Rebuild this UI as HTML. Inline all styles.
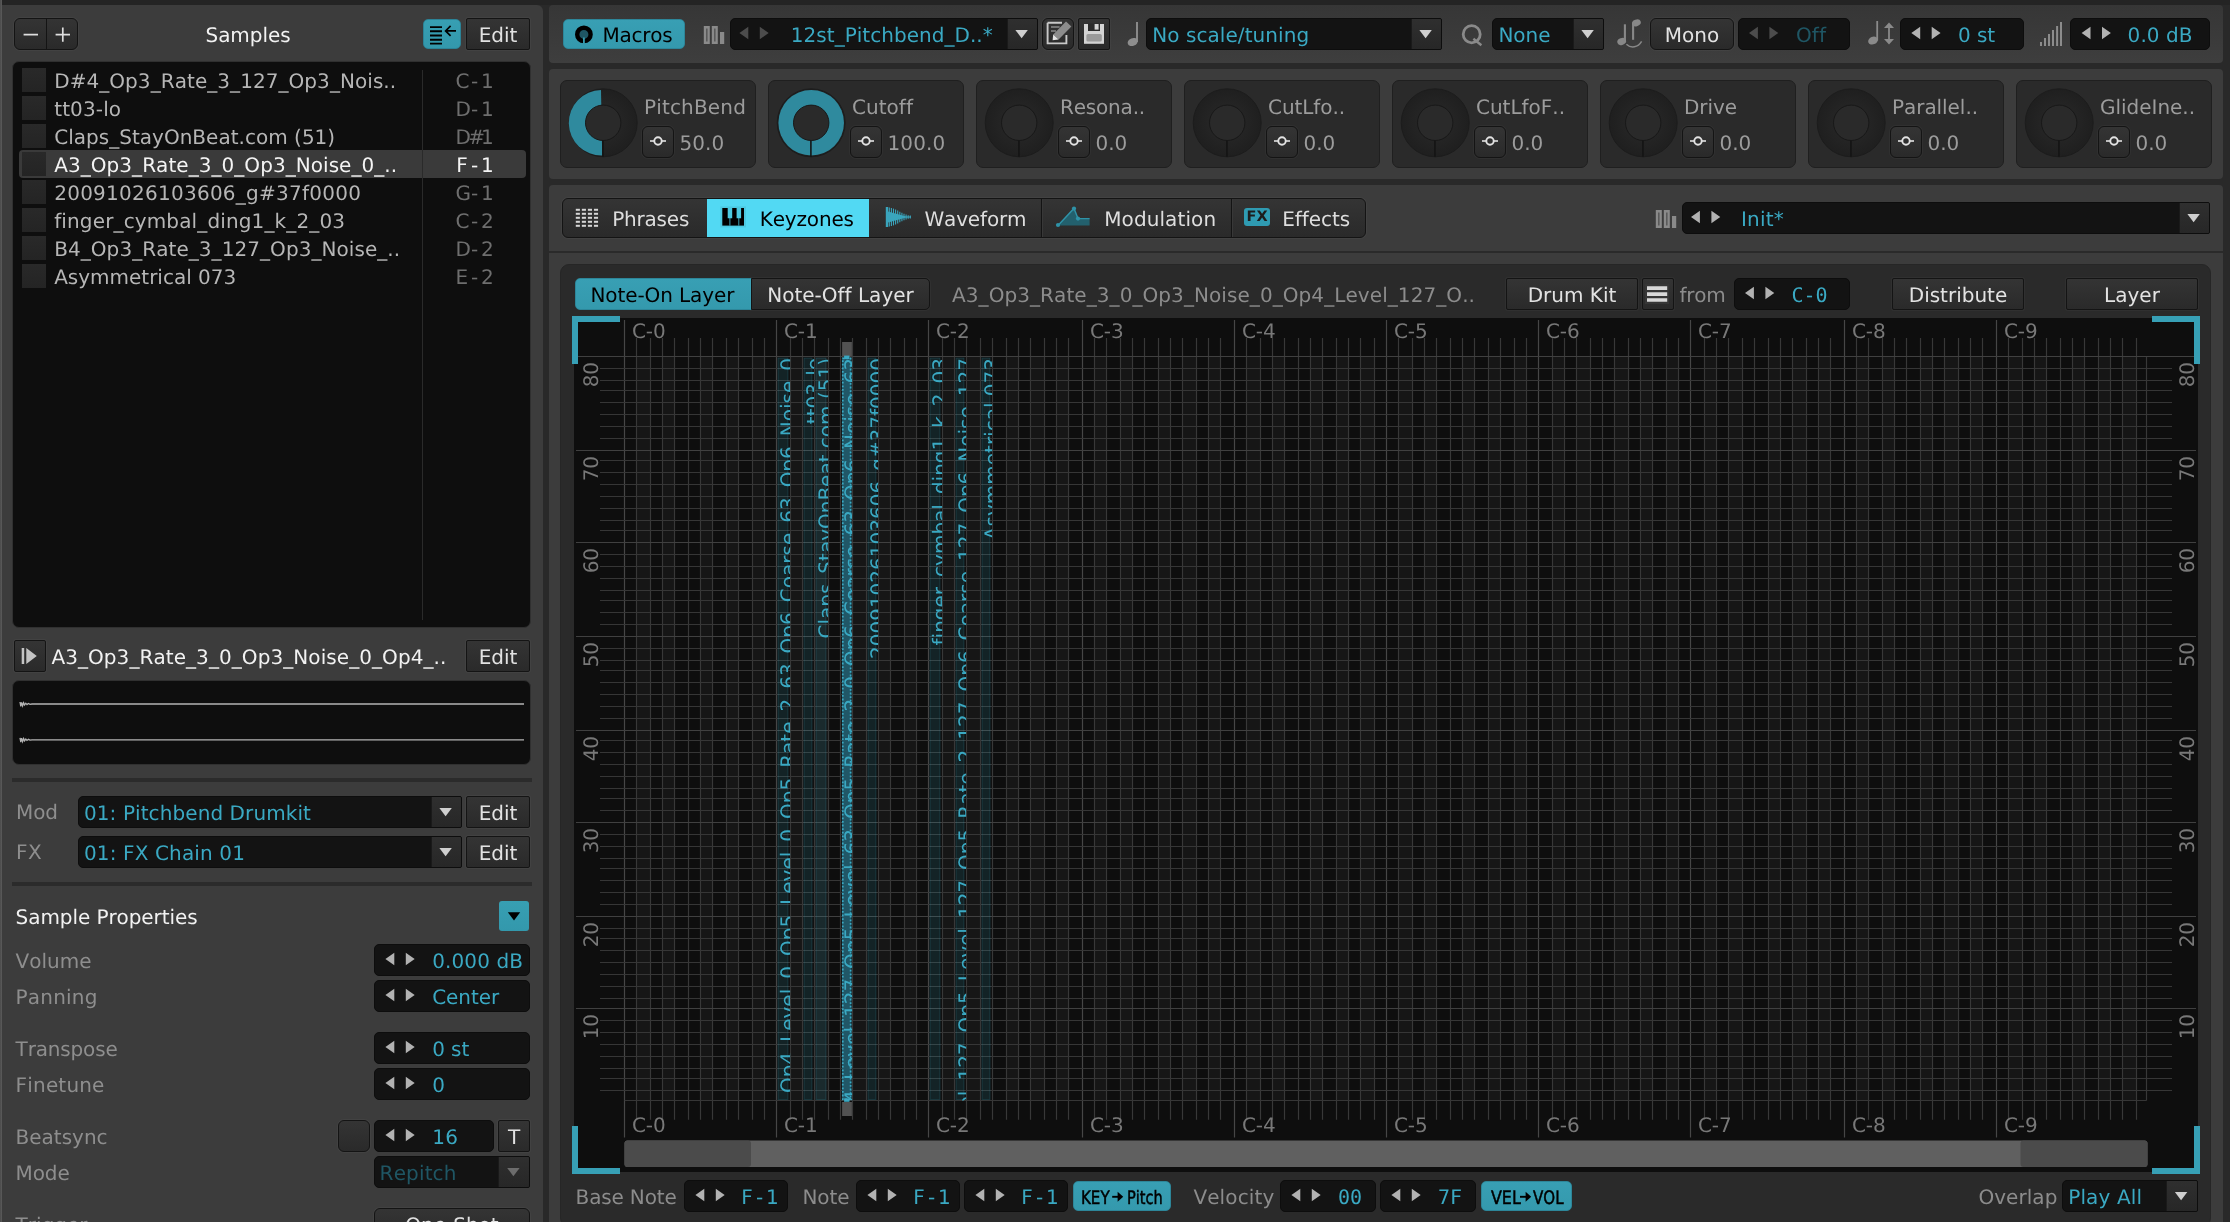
<!DOCTYPE html><html><head><meta charset="utf-8"><title>Sampler Keyzones</title><style>
*{box-sizing:border-box;margin:0;padding:0}
html,body{width:2230px;height:1222px;overflow:hidden;background:#292929}
body{position:relative;font-family:"DejaVu Sans","Liberation Sans",sans-serif;font-size:20px;color:#e4e4e4;line-height:24px;-webkit-font-smoothing:antialiased;font-kerning:none;font-variant-ligatures:none;text-rendering:geometricPrecision}
.a{position:absolute}
.pn{position:absolute;background:#3c3c3c}
.btn{position:absolute;border:1px solid #141414;background:linear-gradient(#343434,#2a2a2a);color:#e2e2e2;text-align:center;white-space:nowrap;box-shadow:0 0 0 1px rgba(255,255,255,0.03)}
.vb{position:absolute;background:#131313;border-radius:5px;border:1px solid #0d0d0d;white-space:nowrap;overflow:hidden}
.dd{position:absolute;top:0;bottom:0;right:0;background:linear-gradient(#2f2f2f,#272727);border-left:1px solid #1a1a1a}
.t{position:absolute;white-space:nowrap}
.teal{color:#3aa9c3}
.dim{color:#1f5664}
.lab{color:#8e8e8e}
.mono{font-family:"DejaVu Sans Mono","Liberation Mono",monospace}
svg{position:absolute;overflow:visible}
</style></head><body><div id="root" style="position:absolute;left:0;top:0;width:2230px;height:1222px;overflow:hidden;will-change:transform">
<div class="a" style="left:0px;top:0px;width:2230px;height:5px;background:#242424"></div>
<div class="a" style="left:0px;top:0px;width:2px;height:1222px;background:linear-gradient(90deg,#4a4a4a,#5c5c5c)"></div>
<div class="pn" style="left:2px;top:5px;width:541px;height:1217px;border-radius:0 6px 0 0"></div>
<div class="pn" style="left:549px;top:5px;width:1674px;height:58px;border-radius:4px;background:linear-gradient(#363636,#3e3e3e)"></div>
<div class="pn" style="left:549px;top:69px;width:1674px;height:110px;border-radius:4px"></div>
<div class="pn" style="left:549px;top:185px;width:1674px;height:1045px;border-radius:4px"></div>
<div class="a" style="left:549px;top:250.8px;width:1674px;height:2.3999999999999773px;background:#2a2a2a"></div>
<div class="btn" style="left:14px;top:18px;width:64px;height:32px;border-radius:6px"><div class="a" style="left:30.5px;top:0;bottom:0;width:1px;background:#141414"></div></div>
<svg class="a" style="left:0;top:0" width="1" height="1"><path d="M23.6,34.6H38 M55.6,34.6H70 M62.8,27.4V41.8" stroke="#dedede" stroke-width="1.7" fill="none"/></svg>
<div class="t " style="left:205.5px;top:22.98px;font-size:20px;line-height:24.0px;letter-spacing:-0.059px;color:#f2f2f2">Samples</div>
<div class="a" style="left:423px;top:19px;width:38px;height:30px;background:linear-gradient(#379fb3,#3398ac);border-radius:5px;border:1px solid #2b8397"></div>
<svg class="a" style="left:0;top:0" width="1" height="1"><path d="M430,27.1H442 M430,31.3H442 M430,35.5H442 M430,39.7H442 M430,43.6H442" stroke="#000" stroke-width="1.9" fill="none"/><path d="M445.4,30.9H456 M450.6,25.9L445.6,30.9L450.6,35.9" stroke="#000" stroke-width="1.7" fill="none"/></svg>
<div class="btn" style="left:466px;top:18px;width:64px;height:32px;border-radius:2px;">
<div style="position:absolute;left:0;right:0;top:3.90px;line-height:24px;">Edit</div>
</div>
<div class="a" style="left:12px;top:61px;width:519px;height:567px;background:#0e0e0e;border-radius:7px;border:1px solid #303030"></div>
<div class="a" style="left:19px;top:150px;width:507px;height:28px;background:#3a3a3a;border-radius:4px"></div>
<div class="a" style="left:422px;top:70px;width:1px;height:550px;background:#2a2a2a"></div>
<div class="a" style="left:22px;top:68px;width:24px;height:24px;background:linear-gradient(#292929,#242424)"></div>
<div class="t " style="left:54.2px;top:69.08px;font-size:20px;line-height:24.0px;letter-spacing:0.059px;color:#b6b6b6">D#4_Op3_Rate_3_127_Op3_Nois..</div>
<div class="t " style="left:455.6px;top:69.08px;font-size:20px;line-height:24.0px;letter-spacing:0.000px;color:#6e6e6e"><span style="display:inline-block;width:12.7px;text-align:center">C</span><span style="display:inline-block;width:12.7px;text-align:center">-</span><span style="display:inline-block;width:12.7px;text-align:center">1</span></div>
<div class="a" style="left:22px;top:96px;width:24px;height:24px;background:linear-gradient(#292929,#242424)"></div>
<div class="t " style="left:54.2px;top:97.08px;font-size:20px;line-height:24.0px;letter-spacing:0.122px;color:#b6b6b6">tt03-lo</div>
<div class="t " style="left:455.6px;top:97.08px;font-size:20px;line-height:24.0px;letter-spacing:0.000px;color:#6e6e6e"><span style="display:inline-block;width:12.7px;text-align:center">D</span><span style="display:inline-block;width:12.7px;text-align:center">-</span><span style="display:inline-block;width:12.7px;text-align:center">1</span></div>
<div class="a" style="left:22px;top:124px;width:24px;height:24px;background:linear-gradient(#292929,#242424)"></div>
<div class="t " style="left:54.2px;top:125.08px;font-size:20px;line-height:24.0px;letter-spacing:0.018px;color:#b6b6b6">Claps_StayOnBeat.com (51)</div>
<div class="t " style="left:455.6px;top:125.08px;font-size:20px;line-height:24.0px;letter-spacing:0.000px;color:#6e6e6e"><span style="display:inline-block;width:12.7px;text-align:center">D</span><span style="display:inline-block;width:12.7px;text-align:center">#</span><span style="display:inline-block;width:12.7px;text-align:center">1</span></div>
<div class="a" style="left:22px;top:152px;width:24px;height:24px;background:linear-gradient(#292929,#242424)"></div>
<div class="t " style="left:54.2px;top:153.08px;font-size:20px;line-height:24.0px;letter-spacing:0.053px;color:#f4f4f4">A3_Op3_Rate_3_0_Op3_Noise_0_..</div>
<div class="t " style="left:455.6px;top:153.08px;font-size:20px;line-height:24.0px;letter-spacing:0.000px;color:#f4f4f4"><span style="display:inline-block;width:12.7px;text-align:center">F</span><span style="display:inline-block;width:12.7px;text-align:center">-</span><span style="display:inline-block;width:12.7px;text-align:center">1</span></div>
<div class="a" style="left:22px;top:180px;width:24px;height:24px;background:linear-gradient(#292929,#242424)"></div>
<div class="t " style="left:54.2px;top:181.08px;font-size:20px;line-height:24.0px;letter-spacing:0.250px;color:#b6b6b6">20091026103606_g#37f0000</div>
<div class="t " style="left:455.6px;top:181.08px;font-size:20px;line-height:24.0px;letter-spacing:0.000px;color:#6e6e6e"><span style="display:inline-block;width:12.7px;text-align:center">G</span><span style="display:inline-block;width:12.7px;text-align:center">-</span><span style="display:inline-block;width:12.7px;text-align:center">1</span></div>
<div class="a" style="left:22px;top:208px;width:24px;height:24px;background:linear-gradient(#292929,#242424)"></div>
<div class="t " style="left:54.2px;top:209.08px;font-size:20px;line-height:24.0px;letter-spacing:0.137px;color:#b6b6b6">finger_cymbal_ding1_k_2_03</div>
<div class="t " style="left:455.6px;top:209.08px;font-size:20px;line-height:24.0px;letter-spacing:0.000px;color:#6e6e6e"><span style="display:inline-block;width:12.7px;text-align:center">C</span><span style="display:inline-block;width:12.7px;text-align:center">-</span><span style="display:inline-block;width:12.7px;text-align:center">2</span></div>
<div class="a" style="left:22px;top:236px;width:24px;height:24px;background:linear-gradient(#292929,#242424)"></div>
<div class="t " style="left:54.2px;top:237.08px;font-size:20px;line-height:24.0px;letter-spacing:0.061px;color:#b6b6b6">B4_Op3_Rate_3_127_Op3_Noise_..</div>
<div class="t " style="left:455.6px;top:237.08px;font-size:20px;line-height:24.0px;letter-spacing:0.000px;color:#6e6e6e"><span style="display:inline-block;width:12.7px;text-align:center">D</span><span style="display:inline-block;width:12.7px;text-align:center">-</span><span style="display:inline-block;width:12.7px;text-align:center">2</span></div>
<div class="a" style="left:22px;top:264px;width:24px;height:24px;background:linear-gradient(#292929,#242424)"></div>
<div class="t " style="left:54.2px;top:265.08px;font-size:20px;line-height:24.0px;letter-spacing:-0.011px;color:#b6b6b6">Asymmetrical 073</div>
<div class="t " style="left:455.6px;top:265.08px;font-size:20px;line-height:24.0px;letter-spacing:0.000px;color:#6e6e6e"><span style="display:inline-block;width:12.7px;text-align:center">E</span><span style="display:inline-block;width:12.7px;text-align:center">-</span><span style="display:inline-block;width:12.7px;text-align:center">2</span></div>
<div class="btn" style="left:14px;top:640px;width:32px;height:32px;border-radius:2px;">
</div>
<svg class="a" style="left:0;top:0" width="1" height="1"><path d="M21.7,648h2.5v16h-2.5z M26.3,648L36.8,656L26.3,664z" fill="#c4c4c4"/></svg>
<div class="t " style="left:51.4px;top:644.88px;font-size:20px;line-height:24.0px;letter-spacing:0.072px;color:#f2f2f2">A3_Op3_Rate_3_0_Op3_Noise_0_Op4_..</div>
<div class="btn" style="left:466px;top:640px;width:64px;height:32px;border-radius:2px;">
<div style="position:absolute;left:0;right:0;top:3.90px;line-height:24px;">Edit</div>
</div>
<div class="a" style="left:12px;top:680px;width:519px;height:85px;background:#0e0e0e;border-radius:7px;border:1px solid #303030"></div>
<svg class="a" style="left:0;top:0" width="1" height="1"><path d="M20,702L20.8,706.4L21.6,702.4L22.6,705.8L23.6,702.8L24.6,705L25.8,703.2L27,704.6L28.4,703.5L30,704.3L32,704L524,704" stroke="#b4b4b4" stroke-width="1.3" fill="none"/></svg>
<svg class="a" style="left:0;top:0" width="1" height="1"><path d="M20,737.8L20.8,742.1999999999999L21.6,738.1999999999999L22.6,741.5999999999999L23.6,738.5999999999999L24.6,740.8L25.8,739.0L27,740.4L28.4,739.3L30,740.0999999999999L32,739.8L524,739.8" stroke="#b4b4b4" stroke-width="1.3" fill="none"/></svg>
<div class="a" style="left:12px;top:778px;width:520px;height:4px;background:#2b2b2b"></div>
<div class="t lab" style="left:16px;top:800.08px;font-size:20px;line-height:24.0px;letter-spacing:-0.062px;">Mod</div>
<div class="vb" style="left:78px;top:796px;width:384px;height:32px;border-radius:5px 2px 2px 5px;">
<div class="dd" style="width:30px"></div>
</div>
<svg class="a" style="left:0;top:0" width="1" height="1"><path d="M439.40000000000003,808.0500000000001 L451.8,808.0500000000001 L445.6,816.35Z" fill="#cfcfcf"/></svg>
<div class="t teal" style="left:84px;top:800.98px;font-size:20px;line-height:24.0px;letter-spacing:0.087px;">01: Pitchbend Drumkit</div>
<div class="btn" style="left:466px;top:796px;width:64px;height:32px;border-radius:2px;">
<div style="position:absolute;left:0;right:0;top:3.90px;line-height:24px;">Edit</div>
</div>
<div class="t lab" style="left:16px;top:840.08px;font-size:20px;line-height:24.0px;letter-spacing:0.397px;">FX</div>
<div class="vb" style="left:78px;top:836px;width:384px;height:32px;border-radius:5px 2px 2px 5px;">
<div class="dd" style="width:30px"></div>
</div>
<svg class="a" style="left:0;top:0" width="1" height="1"><path d="M439.40000000000003,848.0500000000001 L451.8,848.0500000000001 L445.6,856.35Z" fill="#cfcfcf"/></svg>
<div class="t teal" style="left:84px;top:840.98px;font-size:20px;line-height:24.0px;letter-spacing:0.130px;">01: FX Chain 01</div>
<div class="btn" style="left:466px;top:836px;width:64px;height:32px;border-radius:2px;">
<div style="position:absolute;left:0;right:0;top:3.90px;line-height:24px;">Edit</div>
</div>
<div class="a" style="left:12px;top:882px;width:520px;height:4px;background:#2b2b2b"></div>
<div class="t " style="left:15.6px;top:905.08px;font-size:20px;line-height:24.0px;letter-spacing:-0.072px;color:#f2f2f2">Sample Properties</div>
<div class="a" style="left:499px;top:901px;width:30px;height:30px;background:linear-gradient(#379fb3,#3398ac);border-radius:3px"></div>
<svg class="a" style="left:0;top:0" width="1" height="1"><path d="M507.8,912.1999999999999 L520.2,912.1999999999999 L514,920.6Z" fill="#000"/></svg>
<div class="t lab" style="left:15.6px;top:949.38px;font-size:20px;line-height:24.0px;letter-spacing:0.010px;">Volume</div>
<div class="vb" style="left:374px;top:944px;width:156px;height:32px;">
</div>
<svg class="a" style="left:0;top:0" width="1" height="1"><path d="M385.4,959.0 L394.29999999999995,952.8 L394.29999999999995,965.2Z M414.69999999999993,959.0 L405.79999999999995,952.8 L405.79999999999995,965.2Z" fill="#b2b2b2"/></svg>
<div class="t teal" style="left:432.2px;top:948.98px;font-size:20px;line-height:24.0px;letter-spacing:0.121px;">0.000 dB</div>
<div class="t lab" style="left:15.6px;top:985.38px;font-size:20px;line-height:24.0px;letter-spacing:0.200px;">Panning</div>
<div class="vb" style="left:374px;top:980px;width:156px;height:32px;">
</div>
<svg class="a" style="left:0;top:0" width="1" height="1"><path d="M385.4,995.0 L394.29999999999995,988.8 L394.29999999999995,1001.2Z M414.69999999999993,995.0 L405.79999999999995,988.8 L405.79999999999995,1001.2Z" fill="#b2b2b2"/></svg>
<div class="t teal" style="left:432.2px;top:984.98px;font-size:20px;line-height:24.0px;letter-spacing:-0.053px;">Center</div>
<div class="t lab" style="left:15.6px;top:1037.38px;font-size:20px;line-height:24.0px;letter-spacing:-0.161px;">Transpose</div>
<div class="vb" style="left:374px;top:1032px;width:156px;height:32px;">
</div>
<svg class="a" style="left:0;top:0" width="1" height="1"><path d="M385.4,1047.0 L394.29999999999995,1040.8 L394.29999999999995,1053.2Z M414.69999999999993,1047.0 L405.79999999999995,1040.8 L405.79999999999995,1053.2Z" fill="#b2b2b2"/></svg>
<div class="t teal" style="left:432.2px;top:1036.98px;font-size:20px;line-height:24.0px;letter-spacing:-0.086px;">0 st</div>
<div class="t lab" style="left:15.6px;top:1073.38px;font-size:20px;line-height:24.0px;letter-spacing:0.182px;">Finetune</div>
<div class="vb" style="left:374px;top:1068px;width:156px;height:32px;">
</div>
<svg class="a" style="left:0;top:0" width="1" height="1"><path d="M385.4,1083.0 L394.29999999999995,1076.8 L394.29999999999995,1089.2Z M414.69999999999993,1083.0 L405.79999999999995,1076.8 L405.79999999999995,1089.2Z" fill="#b2b2b2"/></svg>
<div class="t teal" style="left:432.2px;top:1072.98px;font-size:20px;line-height:24.0px;letter-spacing:0.275px;">0</div>
<div class="t lab" style="left:15.6px;top:1125.38px;font-size:20px;line-height:24.0px;letter-spacing:-0.007px;">Beatsync</div>
<div class="btn" style="left:338px;top:1120px;width:32px;height:32px;border-radius:6px;">
</div>
<div class="vb" style="left:374px;top:1120px;width:120px;height:32px;">
</div>
<svg class="a" style="left:0;top:0" width="1" height="1"><path d="M385.4,1135.0 L394.29999999999995,1128.8 L394.29999999999995,1141.2Z M414.69999999999993,1135.0 L405.79999999999995,1128.8 L405.79999999999995,1141.2Z" fill="#b2b2b2"/></svg>
<div class="t teal" style="left:432.2px;top:1124.98px;font-size:20px;line-height:24.0px;letter-spacing:0.275px;">16</div>
<div class="btn" style="left:498px;top:1120px;width:32px;height:32px;border-radius:2px;">
<div style="position:absolute;left:0;right:0;top:3.90px;line-height:24px;">T</div>
</div>
<div class="t lab" style="left:15.6px;top:1161.38px;font-size:20px;line-height:24.0px;letter-spacing:-0.123px;">Mode</div>
<div class="vb" style="left:374px;top:1156px;width:156px;height:32px;border-radius:5px 2px 2px 5px"><div class="dd" style="width:31px"></div></div>
<svg class="a" style="left:0;top:0" width="1" height="1"><path d="M507.2,1168.05 L519.6,1168.05 L513.4,1176.3500000000001Z" fill="#6c6c6c"/></svg>
<div class="t dim" style="left:379.6px;top:1160.98px;font-size:20px;line-height:24.0px;letter-spacing:0.147px;">Repitch</div>
<div class="t lab" style="left:15.6px;top:1213.38px;font-size:20px;line-height:24.0px;letter-spacing:0.012px;">Trigger</div>
<div class="btn" style="left:374px;top:1208px;width:156px;height:32px;border-radius:6px;">
<div style="position:absolute;left:0;right:0;top:3.90px;line-height:24px;">One-Shot</div>
</div>
<div class="a" style="left:563px;top:19px;width:122px;height:30px;background:linear-gradient(#389fb4,#3499ad);border-radius:5px;border:1px solid #2d8699"></div>
<svg class="a" style="left:0;top:0" width="1" height="1"><circle cx="583.9" cy="34.4" r="6.7" fill="#1f5664" stroke="#000" stroke-width="4.4"/><path d="M583.9,37.5V44" stroke="#359cb0" stroke-width="1.8"/></svg>
<div class="t " style="left:602.4px;top:22.88px;font-size:20px;line-height:24.0px;letter-spacing:-0.232px;color:#000">Macros</div>
<svg class="a" style="left:0;top:0" width="1" height="1"><path d="M703.8,26h6v18h-6z M711.8,26h6v18h-6z M720.0,32h4.2v12h-4.2z" fill="#8a8a8a"/><path d="M706.8,28.4v13.2 M714.8,28.4v13.2" stroke="#5a5a5a" stroke-width="1.6"/></svg>
<div class="vb" style="left:730px;top:18px;width:308px;height:32px;border-radius:5px 2px 2px 5px;">
<div class="dd" style="width:30px"></div>
</div>
<svg class="a" style="left:0;top:0" width="1" height="1"><path d="M739.4,33.0 L748.3,26.8 L748.3,39.2Z M768.6999999999999,33.0 L759.8,26.8 L759.8,39.2Z" fill="#4c4c4c"/></svg>
<svg class="a" style="left:0;top:0" width="1" height="1"><path d="M1015.4,30.050000000000004 L1027.8,30.050000000000004 L1021.6,38.35Z" fill="#cfcfcf"/></svg>
<div class="t teal" style="left:790.8px;top:22.98px;font-size:20px;line-height:24.0px;letter-spacing:0.035px;">12st_Pitchbend_D..*</div>
<div class="btn" style="left:1042px;top:18px;width:32px;height:32px;border-radius:6px;">
</div>
<svg class="a" style="left:0;top:0" width="1" height="1"><path d="M1047.6,22.8H1062 M1047.6,22.8V43.4H1066.4V35" stroke="#c8c8c8" stroke-width="1.9" fill="none"/><path d="M1051,27H1059.6 M1051,31H1056" stroke="#8a8a8a" stroke-width="1.7"/><path d="M1066,21.4L1071.4,26.6L1058.6,39.6L1053.2,34.4Z" fill="#8c8c8c"/><path d="M1053.2,34.4L1058.6,39.6L1052.6,40.2Z" fill="#e4e4e4"/></svg>
<div class="btn" style="left:1078px;top:18px;width:32px;height:32px;border-radius:2px;">
</div>
<svg class="a" style="left:0;top:0" width="1" height="1"><path d="M1084,24H1104V43.8H1084Z" fill="#d4d4d4"/><path d="M1088,23.5H1100V31H1088Z" fill="#2b2b2b"/><path d="M1094.6,24H1098.6V29.6H1094.6Z" fill="#d4d4d4"/><rect x="1086.4" y="34" width="15.4" height="7.6" rx="1.6" fill="#9a9a9a"/></svg>
<svg class="a" style="left:0;top:0" width="1" height="1"><ellipse cx="1132.7" cy="42" rx="5.2" ry="3.9" transform="rotate(-22 1132.7 42)" fill="#8e8e8e"/><path d="M1137,22V42" stroke="#8e8e8e" stroke-width="1.9"/></svg>
<div class="vb" style="left:1146px;top:18px;width:296px;height:32px;border-radius:5px 2px 2px 5px;">
<div class="dd" style="width:30px"></div>
</div>
<svg class="a" style="left:0;top:0" width="1" height="1"><path d="M1419.3999999999999,30.050000000000004 L1431.8,30.050000000000004 L1425.6,38.35Z" fill="#cfcfcf"/></svg>
<div class="t teal" style="left:1152.2px;top:22.98px;font-size:20px;line-height:24.0px;letter-spacing:0.070px;">No scale/tuning</div>
<svg class="a" style="left:0;top:0" width="1" height="1"><ellipse cx="1471.7" cy="34.2" rx="8.5" ry="8.6" fill="none" stroke="#8a8a8a" stroke-width="2.8"/><path d="M1473.4,38.8L1481.4,45.2" stroke="#8a8a8a" stroke-width="2.4"/></svg>
<div class="vb" style="left:1492px;top:18px;width:112px;height:32px;border-radius:5px 2px 2px 5px;">
<div class="dd" style="width:30px"></div>
</div>
<svg class="a" style="left:0;top:0" width="1" height="1"><path d="M1581.3999999999999,30.050000000000004 L1593.8,30.050000000000004 L1587.6,38.35Z" fill="#cfcfcf"/></svg>
<div class="t teal" style="left:1498.4px;top:22.98px;font-size:20px;line-height:24.0px;letter-spacing:-0.045px;">None</div>
<svg class="a" style="left:0;top:0" width="1" height="1"><ellipse cx="1621.7" cy="41.5" rx="4.5" ry="3.4" transform="rotate(-20 1621.7 41.5)" fill="#888"/><path d="M1624.9,24.3V41.5" stroke="#888" stroke-width="2.1"/><ellipse cx="1636.4" cy="22.9" rx="4.5" ry="3.4" transform="rotate(-20 1636.4 22.9)" fill="#888"/><path d="M1633.1,23V39.8" stroke="#888" stroke-width="2.1"/><path d="M1626.4,44.2C1631,48.6 1638,47.6 1641.6,41.4" stroke="#888" stroke-width="1.5" fill="none"/></svg>
<div class="btn" style="left:1650px;top:18px;width:84px;height:32px;border-radius:6px;">
<div style="position:absolute;left:0;right:0;top:3.90px;line-height:24px;">Mono</div>
</div>
<div class="vb" style="left:1738px;top:18px;width:112px;height:32px;">
</div>
<svg class="a" style="left:0;top:0" width="1" height="1"><path d="M1749,33.0 L1757.9,26.8 L1757.9,39.2Z M1778.3000000000002,33.0 L1769.4,26.8 L1769.4,39.2Z" fill="#4c4c4c"/></svg>
<div class="t dim" style="left:1796px;top:22.98px;font-size:20px;line-height:24.0px;letter-spacing:0.059px;">Off</div>
<svg class="a" style="left:0;top:0" width="1" height="1"><ellipse cx="1873" cy="40.6" rx="5" ry="3.8" transform="rotate(-22 1873 40.6)" fill="#8a8a8a"/><path d="M1877.2,21V40.6" stroke="#8a8a8a" stroke-width="1.8"/><path d="M1889,25V42" stroke="#8a8a8a" stroke-width="1.8"/><path d="M1884,28L1889,22.6L1894,28Z M1884,39L1889,44.4L1894,39Z" fill="#8a8a8a"/></svg>
<div class="vb" style="left:1900px;top:18px;width:124px;height:32px;">
</div>
<svg class="a" style="left:0;top:0" width="1" height="1"><path d="M1911.3,33.0 L1920.2,26.8 L1920.2,39.2Z M1940.6000000000001,33.0 L1931.7,26.8 L1931.7,39.2Z" fill="#b2b2b2"/></svg>
<div class="t teal" style="left:1958px;top:22.98px;font-size:20px;line-height:24.0px;letter-spacing:-0.086px;">0 st</div>
<svg class="a" style="left:0;top:0" width="1" height="1"><path d="M2041,42V46 M2045,38V46 M2049,34V46 M2053,30V46 M2057.1,26V46 M2061,22V46" stroke="#8c8c8c" stroke-width="2"/></svg>
<div class="vb" style="left:2070px;top:18px;width:140px;height:32px;">
</div>
<svg class="a" style="left:0;top:0" width="1" height="1"><path d="M2081.6,33.0 L2090.5,26.8 L2090.5,39.2Z M2110.9,33.0 L2102.0,26.8 L2102.0,39.2Z" fill="#b2b2b2"/></svg>
<div class="t teal" style="left:2127.6px;top:22.98px;font-size:20px;line-height:24.0px;letter-spacing:0.070px;">0.0 dB</div>
<div class="a" style="left:560px;top:80px;width:196px;height:88px;background:#2a2a2a;border:1px solid #1f1f1f;border-radius:7px"></div>
<svg class="a" style="left:0;top:0" width="1" height="1"><defs><radialGradient id="kg0" cx="50%" cy="50%" r="50%"><stop offset="0.55" stop-color="#242424"/><stop offset="1" stop-color="#1f1f1f"/></radialGradient></defs><circle cx="603.2" cy="122.8" r="34" fill="url(#kg0)" stroke="#1c1c1c" stroke-width="1"/><path d="M602.2,155.60000000000002 A32.8,32.8 0 0 1 601.0,90.0 Z" fill="#2f8a9e"/><circle cx="603.2" cy="122.8" r="17.7" fill="#2a2a2a" stroke="#181818" stroke-width="1"/><path d="M602.9000000000001,140.5V156.8" stroke="#141414" stroke-width="1.6"/></svg>
<div class="t " style="left:644px;top:95.28px;font-size:20px;line-height:24.0px;letter-spacing:0.163px;color:#9c9c9c">PitchBend</div>
<div class="btn" style="left:642px;top:126px;width:32px;height:32px;border-radius:6px;">
</div>
<svg class="a" style="left:0;top:0" width="1" height="1"><path d="M650,141H666" stroke="#e2e2e2" stroke-width="1.6"/><circle cx="658" cy="141" r="3.7" fill="#2e2e2e" stroke="#e2e2e2" stroke-width="1.9"/></svg>
<div class="t " style="left:679.4px;top:131.08px;font-size:20px;line-height:24.0px;letter-spacing:0.117px;color:#9c9c9c">50.0</div>
<div class="a" style="left:768px;top:80px;width:196px;height:88px;background:#2a2a2a;border:1px solid #1f1f1f;border-radius:7px"></div>
<svg class="a" style="left:0;top:0" width="1" height="1"><defs><radialGradient id="kg1" cx="50%" cy="50%" r="50%"><stop offset="0.55" stop-color="#242424"/><stop offset="1" stop-color="#1f1f1f"/></radialGradient></defs><circle cx="811.2" cy="122.8" r="34" fill="url(#kg1)" stroke="#1c1c1c" stroke-width="1"/><circle cx="811.2" cy="122.8" r="32.8" fill="#2f8a9e"/><circle cx="811.2" cy="122.8" r="17.7" fill="#2a2a2a" stroke="#181818" stroke-width="1"/><path d="M810.9000000000001,140.5V156.8" stroke="#141414" stroke-width="1.6"/></svg>
<div class="t " style="left:852px;top:95.28px;font-size:20px;line-height:24.0px;letter-spacing:0.033px;color:#9c9c9c">Cutoff</div>
<div class="btn" style="left:850px;top:126px;width:32px;height:32px;border-radius:6px;">
</div>
<svg class="a" style="left:0;top:0" width="1" height="1"><path d="M858,141H874" stroke="#e2e2e2" stroke-width="1.6"/><circle cx="866" cy="141" r="3.7" fill="#2e2e2e" stroke="#e2e2e2" stroke-width="1.9"/></svg>
<div class="t " style="left:887.4px;top:131.08px;font-size:20px;line-height:24.0px;letter-spacing:0.148px;color:#9c9c9c">100.0</div>
<div class="a" style="left:976px;top:80px;width:196px;height:88px;background:#2a2a2a;border:1px solid #1f1f1f;border-radius:7px"></div>
<svg class="a" style="left:0;top:0" width="1" height="1"><defs><radialGradient id="kg2" cx="50%" cy="50%" r="50%"><stop offset="0.55" stop-color="#242424"/><stop offset="1" stop-color="#1f1f1f"/></radialGradient></defs><circle cx="1019.2" cy="122.8" r="34" fill="url(#kg2)" stroke="#1c1c1c" stroke-width="1"/><circle cx="1019.2" cy="122.8" r="17.7" fill="#2a2a2a" stroke="#181818" stroke-width="1"/><path d="M1018.9000000000001,140.5V156.8" stroke="#141414" stroke-width="1.6"/></svg>
<div class="t " style="left:1060px;top:95.28px;font-size:20px;line-height:24.0px;letter-spacing:-0.188px;color:#9c9c9c">Resona..</div>
<div class="btn" style="left:1058px;top:126px;width:32px;height:32px;border-radius:6px;">
</div>
<svg class="a" style="left:0;top:0" width="1" height="1"><path d="M1066,141H1082" stroke="#e2e2e2" stroke-width="1.6"/><circle cx="1074" cy="141" r="3.7" fill="#2e2e2e" stroke="#e2e2e2" stroke-width="1.9"/></svg>
<div class="t " style="left:1095.4px;top:131.08px;font-size:20px;line-height:24.0px;letter-spacing:0.064px;color:#9c9c9c">0.0</div>
<div class="a" style="left:1184px;top:80px;width:196px;height:88px;background:#2a2a2a;border:1px solid #1f1f1f;border-radius:7px"></div>
<svg class="a" style="left:0;top:0" width="1" height="1"><defs><radialGradient id="kg3" cx="50%" cy="50%" r="50%"><stop offset="0.55" stop-color="#242424"/><stop offset="1" stop-color="#1f1f1f"/></radialGradient></defs><circle cx="1227.2" cy="122.8" r="34" fill="url(#kg3)" stroke="#1c1c1c" stroke-width="1"/><circle cx="1227.2" cy="122.8" r="17.7" fill="#2a2a2a" stroke="#181818" stroke-width="1"/><path d="M1226.9,140.5V156.8" stroke="#141414" stroke-width="1.6"/></svg>
<div class="t " style="left:1268px;top:95.28px;font-size:20px;line-height:24.0px;letter-spacing:-0.077px;color:#9c9c9c">CutLfo..</div>
<div class="btn" style="left:1266px;top:126px;width:32px;height:32px;border-radius:6px;">
</div>
<svg class="a" style="left:0;top:0" width="1" height="1"><path d="M1274,141H1290" stroke="#e2e2e2" stroke-width="1.6"/><circle cx="1282" cy="141" r="3.7" fill="#2e2e2e" stroke="#e2e2e2" stroke-width="1.9"/></svg>
<div class="t " style="left:1303.4px;top:131.08px;font-size:20px;line-height:24.0px;letter-spacing:0.064px;color:#9c9c9c">0.0</div>
<div class="a" style="left:1392px;top:80px;width:196px;height:88px;background:#2a2a2a;border:1px solid #1f1f1f;border-radius:7px"></div>
<svg class="a" style="left:0;top:0" width="1" height="1"><defs><radialGradient id="kg4" cx="50%" cy="50%" r="50%"><stop offset="0.55" stop-color="#242424"/><stop offset="1" stop-color="#1f1f1f"/></radialGradient></defs><circle cx="1435.2" cy="122.8" r="34" fill="url(#kg4)" stroke="#1c1c1c" stroke-width="1"/><circle cx="1435.2" cy="122.8" r="17.7" fill="#2a2a2a" stroke="#181818" stroke-width="1"/><path d="M1434.9,140.5V156.8" stroke="#141414" stroke-width="1.6"/></svg>
<div class="t " style="left:1476px;top:95.28px;font-size:20px;line-height:24.0px;letter-spacing:-0.014px;color:#9c9c9c">CutLfoF..</div>
<div class="btn" style="left:1474px;top:126px;width:32px;height:32px;border-radius:6px;">
</div>
<svg class="a" style="left:0;top:0" width="1" height="1"><path d="M1482,141H1498" stroke="#e2e2e2" stroke-width="1.6"/><circle cx="1490" cy="141" r="3.7" fill="#2e2e2e" stroke="#e2e2e2" stroke-width="1.9"/></svg>
<div class="t " style="left:1511.4px;top:131.08px;font-size:20px;line-height:24.0px;letter-spacing:0.064px;color:#9c9c9c">0.0</div>
<div class="a" style="left:1600px;top:80px;width:196px;height:88px;background:#2a2a2a;border:1px solid #1f1f1f;border-radius:7px"></div>
<svg class="a" style="left:0;top:0" width="1" height="1"><defs><radialGradient id="kg5" cx="50%" cy="50%" r="50%"><stop offset="0.55" stop-color="#242424"/><stop offset="1" stop-color="#1f1f1f"/></radialGradient></defs><circle cx="1643.2" cy="122.8" r="34" fill="url(#kg5)" stroke="#1c1c1c" stroke-width="1"/><circle cx="1643.2" cy="122.8" r="17.7" fill="#2a2a2a" stroke="#181818" stroke-width="1"/><path d="M1642.9,140.5V156.8" stroke="#141414" stroke-width="1.6"/></svg>
<div class="t " style="left:1684px;top:95.28px;font-size:20px;line-height:24.0px;letter-spacing:-0.064px;color:#9c9c9c">Drive</div>
<div class="btn" style="left:1682px;top:126px;width:32px;height:32px;border-radius:6px;">
</div>
<svg class="a" style="left:0;top:0" width="1" height="1"><path d="M1690,141H1706" stroke="#e2e2e2" stroke-width="1.6"/><circle cx="1698" cy="141" r="3.7" fill="#2e2e2e" stroke="#e2e2e2" stroke-width="1.9"/></svg>
<div class="t " style="left:1719.4px;top:131.08px;font-size:20px;line-height:24.0px;letter-spacing:0.064px;color:#9c9c9c">0.0</div>
<div class="a" style="left:1808px;top:80px;width:196px;height:88px;background:#2a2a2a;border:1px solid #1f1f1f;border-radius:7px"></div>
<svg class="a" style="left:0;top:0" width="1" height="1"><defs><radialGradient id="kg6" cx="50%" cy="50%" r="50%"><stop offset="0.55" stop-color="#242424"/><stop offset="1" stop-color="#1f1f1f"/></radialGradient></defs><circle cx="1851.2" cy="122.8" r="34" fill="url(#kg6)" stroke="#1c1c1c" stroke-width="1"/><circle cx="1851.2" cy="122.8" r="17.7" fill="#2a2a2a" stroke="#181818" stroke-width="1"/><path d="M1850.9,140.5V156.8" stroke="#141414" stroke-width="1.6"/></svg>
<div class="t " style="left:1892px;top:95.28px;font-size:20px;line-height:24.0px;letter-spacing:-0.049px;color:#9c9c9c">Parallel..</div>
<div class="btn" style="left:1890px;top:126px;width:32px;height:32px;border-radius:6px;">
</div>
<svg class="a" style="left:0;top:0" width="1" height="1"><path d="M1898,141H1914" stroke="#e2e2e2" stroke-width="1.6"/><circle cx="1906" cy="141" r="3.7" fill="#2e2e2e" stroke="#e2e2e2" stroke-width="1.9"/></svg>
<div class="t " style="left:1927.4px;top:131.08px;font-size:20px;line-height:24.0px;letter-spacing:0.064px;color:#9c9c9c">0.0</div>
<div class="a" style="left:2016px;top:80px;width:196px;height:88px;background:#2a2a2a;border:1px solid #1f1f1f;border-radius:7px"></div>
<svg class="a" style="left:0;top:0" width="1" height="1"><defs><radialGradient id="kg7" cx="50%" cy="50%" r="50%"><stop offset="0.55" stop-color="#242424"/><stop offset="1" stop-color="#1f1f1f"/></radialGradient></defs><circle cx="2059.2" cy="122.8" r="34" fill="url(#kg7)" stroke="#1c1c1c" stroke-width="1"/><circle cx="2059.2" cy="122.8" r="17.7" fill="#2a2a2a" stroke="#181818" stroke-width="1"/><path d="M2058.8999999999996,140.5V156.8" stroke="#141414" stroke-width="1.6"/></svg>
<div class="t " style="left:2100px;top:95.28px;font-size:20px;line-height:24.0px;letter-spacing:-0.021px;color:#9c9c9c">GlideIne..</div>
<div class="btn" style="left:2098px;top:126px;width:32px;height:32px;border-radius:6px;">
</div>
<svg class="a" style="left:0;top:0" width="1" height="1"><path d="M2106,141H2122" stroke="#e2e2e2" stroke-width="1.6"/><circle cx="2114" cy="141" r="3.7" fill="#2e2e2e" stroke="#e2e2e2" stroke-width="1.9"/></svg>
<div class="t " style="left:2135.4px;top:131.08px;font-size:20px;line-height:24.0px;letter-spacing:0.064px;color:#9c9c9c">0.0</div>
<div class="btn" style="left:562px;top:198px;width:804px;height:39.5px;border-radius:6px"></div>
<div class="t " style="left:612.2px;top:206.98px;font-size:20px;line-height:24.0px;letter-spacing:-0.195px;color:#dedede">Phrases</div>
<div class="a" style="left:706.6px;top:199px;width:162.39999999999998px;height:38px;background:#52d9f3"></div>
<div class="t " style="left:759.8px;top:206.98px;font-size:20px;line-height:24.0px;letter-spacing:-0.174px;color:#000">Keyzones</div>
<div class="t " style="left:924.4px;top:206.98px;font-size:20px;line-height:24.0px;letter-spacing:-0.144px;color:#dedede">Waveform</div>
<div class="t " style="left:1104.2px;top:206.98px;font-size:20px;line-height:24.0px;letter-spacing:0.101px;color:#dedede">Modulation</div>
<div class="a" style="left:1041px;top:199px;width:2px;height:38px;background:linear-gradient(90deg,#141414 50%,#383838 50%)"></div>
<div class="t " style="left:1282.2px;top:206.98px;font-size:20px;line-height:24.0px;letter-spacing:-0.040px;color:#dedede">Effects</div>
<div class="a" style="left:1231px;top:199px;width:2px;height:38px;background:linear-gradient(90deg,#141414 50%,#383838 50%)"></div>
<svg class="a" style="left:0;top:0" width="1" height="1"><g fill="#d6d6d6"><rect x="575.80" y="208.8" width="4.1" height="2"/><rect x="581.85" y="208.8" width="4.1" height="2"/><rect x="587.90" y="208.8" width="4.1" height="2"/><rect x="593.95" y="208.8" width="4.1" height="2"/><rect x="575.80" y="212.8" width="4.1" height="2"/><rect x="581.85" y="212.8" width="4.1" height="2"/><rect x="587.90" y="212.8" width="4.1" height="2"/><rect x="593.95" y="212.8" width="4.1" height="2"/><rect x="575.80" y="216.8" width="4.1" height="2"/><rect x="581.85" y="216.8" width="4.1" height="2"/><rect x="587.90" y="216.8" width="4.1" height="2"/><rect x="593.95" y="216.8" width="4.1" height="2"/><rect x="575.80" y="220.8" width="4.1" height="2"/><rect x="581.85" y="220.8" width="4.1" height="2"/><rect x="587.90" y="220.8" width="4.1" height="2"/><rect x="593.95" y="220.8" width="4.1" height="2"/><rect x="575.80" y="224.8" width="4.1" height="2"/><rect x="581.85" y="224.8" width="4.1" height="2"/><rect x="587.90" y="224.8" width="4.1" height="2"/><rect x="593.95" y="224.8" width="4.1" height="2"/></g></svg>
<svg class="a" style="left:0;top:0" width="1" height="1"><rect x="720.3" y="206.4" width="25.7" height="21" fill="#4cc9e1"/><rect x="722.3" y="208" width="21.7" height="17.6" fill="#000"/><path d="M727.7,208h4.5v10.2h-4.5z M736.6,208h4.5v10.2h-4.5z" fill="#4cc9e1"/><path d="M729.9,218V225.6 M738.8,218V225.6" stroke="#4cc9e1" stroke-width="0.8"/></svg>
<svg class="a" style="left:0;top:0" width="1" height="1"><path d="M885.8,207h2.4v20h-2.4z" fill="#3aa5bd"/><path d="M888,211.6L908,217L888,222.4Z" fill="#3aa5bd"/><g stroke="#3aa5bd" stroke-width="1.1"><path d="M889.30,207.4V226.6"/><path d="M891.40,208.0V226.0"/><path d="M893.50,208.6V225.4"/><path d="M895.60,209.6V224.4"/><path d="M897.70,210.6V223.4"/><path d="M899.80,211.8V222.2"/><path d="M901.90,212.8V221.2"/><path d="M904.00,213.8V220.2"/><path d="M906.10,214.6V219.4"/><path d="M908.20,215.2V218.8"/><path d="M910.30,215.6V218.4"/></g><path d="M906,217H911" stroke="#3aa5bd" stroke-width="1"/></svg>
<svg class="a" style="left:0;top:0" width="1" height="1"><path d="M1058,225.4L1074,208.4L1078,218.6L1089.6,218.6V225.4Z" fill="#23606d" /><path d="M1058,225.4L1074,208.4L1078,218.6L1089.6,218.6" fill="none" stroke="#2f93a8" stroke-width="1.4"/><circle cx="1074" cy="208.6" r="2.1" fill="#2f93a8"/><circle cx="1078" cy="218.6" r="2.1" fill="#2f93a8"/><circle cx="1058" cy="225" r="2.1" fill="#2f93a8"/></svg>
<div class="a" style="left:1244px;top:208px;width:26px;height:18px;background:#2f9bb2;border-radius:3px"></div>
<div class="t" style="left:1246.6px;top:207.2px;font-size:14.5px;line-height:20px;font-weight:bold;color:#1d1d1d;letter-spacing:0px">FX</div>
<svg class="a" style="left:0;top:0" width="1" height="1"><path d="M1655.8,210h6v18h-6z M1663.8,210h6v18h-6z M1672.0,216h4.2v12h-4.2z" fill="#8a8a8a"/><path d="M1658.8,212.4v13.2 M1666.8,212.4v13.2" stroke="#5a5a5a" stroke-width="1.6"/></svg>
<div class="vb" style="left:1682px;top:202px;width:528px;height:32px;border-radius:5px 2px 2px 5px;">
<div class="dd" style="width:30px"></div>
</div>
<svg class="a" style="left:0;top:0" width="1" height="1"><path d="M1691,217.0 L1699.9,210.8 L1699.9,223.2Z M1720.3000000000002,217.0 L1711.4,210.8 L1711.4,223.2Z" fill="#b2b2b2"/></svg>
<svg class="a" style="left:0;top:0" width="1" height="1"><path d="M2187.4,214.04999999999998 L2199.7999999999997,214.04999999999998 L2193.6,222.35Z" fill="#cfcfcf"/></svg>
<div class="t teal" style="left:1741px;top:206.98px;font-size:20px;line-height:24.0px;letter-spacing:0.205px;">Init*</div>
<div class="a" style="left:560px;top:264px;width:1651px;height:963px;background:#2a2a2a;border-radius:9px;border:1px solid #262626"></div>
<div class="a" style="left:574.5px;top:278px;width:177.0px;height:32px;background:linear-gradient(#389fb4,#3499ad);border-radius:5px 0 0 5px;border:1px solid #2d8699"></div>
<div class="t " style="left:590.4px;top:283.08px;font-size:20px;line-height:24.0px;letter-spacing:-0.085px;color:#000">Note-On Layer</div>
<div class="btn" style="left:751px;top:278px;width:179px;height:32px;border-radius:2px;border-radius:0 5px 5px 0">
<div style="position:absolute;left:0;right:0;top:3.90px;line-height:24px;">Note-Off Layer</div>
</div>
<div class="t " style="left:952px;top:283.08px;font-size:20px;line-height:24.0px;letter-spacing:0.075px;color:#8c8c8c">A3_Op3_Rate_3_0_Op3_Noise_0_Op4_Level_127_O..</div>
<div class="btn" style="left:1506px;top:278px;width:132px;height:32px;border-radius:2px;">
<div style="position:absolute;left:0;right:0;top:3.90px;line-height:24px;">Drum Kit</div>
</div>
<div class="btn" style="left:1642px;top:278px;width:32px;height:32px;border-radius:2px;">
</div>
<svg class="a" style="left:0;top:0" width="1" height="1"><rect x="1645" y="284" width="24" height="20" fill="#363636"/><path d="M1647,288.2H1667.2 M1647,294.1H1667.2 M1647,300H1667.2" stroke="#d8d8d8" stroke-width="3.7"/></svg>
<div class="t " style="left:1679.4px;top:283.08px;font-size:20px;line-height:24.0px;letter-spacing:-0.246px;color:#8c8c8c">from</div>
<div class="vb" style="left:1734px;top:278px;width:116px;height:32px;">
</div>
<svg class="a" style="left:0;top:0" width="1" height="1"><path d="M1745,293.0 L1753.9,286.8 L1753.9,299.2Z M1774.3000000000002,293.0 L1765.4,286.8 L1765.4,299.2Z" fill="#b2b2b2"/></svg>
<div class="t teal mono" style="left:1791.4px;top:282.98px;font-size:20px;line-height:24.0px;letter-spacing:0.000px;">C-0</div>
<div class="btn" style="left:1892px;top:278px;width:132px;height:32px;border-radius:2px;">
<div style="position:absolute;left:0;right:0;top:3.90px;line-height:24px;">Distribute</div>
</div>
<div class="btn" style="left:2066px;top:278px;width:132px;height:32px;border-radius:2px;">
<div style="position:absolute;left:0;right:0;top:3.90px;line-height:24px;">Layer</div>
</div>
<svg class="a" style="left:0;top:0" width="2230" height="1222" viewBox="0 0 2230 1222">
<rect x="574" y="318" width="1624" height="854" fill="#0e0e0e"/>
<rect x="636.5" y="356.5" width="14.0" height="744.0" fill="#161616"/>
<rect x="662.5" y="356.5" width="12.0" height="744.0" fill="#161616"/>
<rect x="700.5" y="356.5" width="12.0" height="744.0" fill="#161616"/>
<rect x="726.5" y="356.5" width="12.0" height="744.0" fill="#161616"/>
<rect x="752.5" y="356.5" width="12.0" height="744.0" fill="#161616"/>
<rect x="790.5" y="356.5" width="12.0" height="744.0" fill="#161616"/>
<rect x="814.5" y="356.5" width="14.0" height="744.0" fill="#161616"/>
<rect x="852.5" y="356.5" width="14.0" height="744.0" fill="#161616"/>
<rect x="878.5" y="356.5" width="12.0" height="744.0" fill="#161616"/>
<rect x="904.5" y="356.5" width="12.0" height="744.0" fill="#161616"/>
<rect x="942.5" y="356.5" width="12.0" height="744.0" fill="#161616"/>
<rect x="966.5" y="356.5" width="14.0" height="744.0" fill="#161616"/>
<rect x="1006.5" y="356.5" width="12.0" height="744.0" fill="#161616"/>
<rect x="1030.5" y="356.5" width="14.0" height="744.0" fill="#161616"/>
<rect x="1056.5" y="356.5" width="12.0" height="744.0" fill="#161616"/>
<rect x="1094.5" y="356.5" width="12.0" height="744.0" fill="#161616"/>
<rect x="1120.5" y="356.5" width="12.0" height="744.0" fill="#161616"/>
<rect x="1158.5" y="356.5" width="12.0" height="744.0" fill="#161616"/>
<rect x="1182.5" y="356.5" width="14.0" height="744.0" fill="#161616"/>
<rect x="1208.5" y="356.5" width="12.0" height="744.0" fill="#161616"/>
<rect x="1246.5" y="356.5" width="14.0" height="744.0" fill="#161616"/>
<rect x="1272.5" y="356.5" width="12.0" height="744.0" fill="#161616"/>
<rect x="1310.5" y="356.5" width="12.0" height="744.0" fill="#161616"/>
<rect x="1336.5" y="356.5" width="12.0" height="744.0" fill="#161616"/>
<rect x="1360.5" y="356.5" width="14.0" height="744.0" fill="#161616"/>
<rect x="1398.5" y="356.5" width="14.0" height="744.0" fill="#161616"/>
<rect x="1424.5" y="356.5" width="12.0" height="744.0" fill="#161616"/>
<rect x="1462.5" y="356.5" width="12.0" height="744.0" fill="#161616"/>
<rect x="1488.5" y="356.5" width="12.0" height="744.0" fill="#161616"/>
<rect x="1514.5" y="356.5" width="12.0" height="744.0" fill="#161616"/>
<rect x="1552.5" y="356.5" width="12.0" height="744.0" fill="#161616"/>
<rect x="1576.5" y="356.5" width="14.0" height="744.0" fill="#161616"/>
<rect x="1614.5" y="356.5" width="14.0" height="744.0" fill="#161616"/>
<rect x="1640.5" y="356.5" width="12.0" height="744.0" fill="#161616"/>
<rect x="1666.5" y="356.5" width="12.0" height="744.0" fill="#161616"/>
<rect x="1704.5" y="356.5" width="12.0" height="744.0" fill="#161616"/>
<rect x="1728.5" y="356.5" width="14.0" height="744.0" fill="#161616"/>
<rect x="1768.5" y="356.5" width="12.0" height="744.0" fill="#161616"/>
<rect x="1792.5" y="356.5" width="14.0" height="744.0" fill="#161616"/>
<rect x="1818.5" y="356.5" width="12.0" height="744.0" fill="#161616"/>
<rect x="1856.5" y="356.5" width="12.0" height="744.0" fill="#161616"/>
<rect x="1882.5" y="356.5" width="12.0" height="744.0" fill="#161616"/>
<rect x="1920.5" y="356.5" width="12.0" height="744.0" fill="#161616"/>
<rect x="1944.5" y="356.5" width="14.0" height="744.0" fill="#161616"/>
<rect x="1970.5" y="356.5" width="12.0" height="744.0" fill="#161616"/>
<rect x="2008.5" y="356.5" width="14.0" height="744.0" fill="#161616"/>
<rect x="2034.5" y="356.5" width="12.0" height="744.0" fill="#161616"/>
<rect x="2072.5" y="356.5" width="12.0" height="744.0" fill="#161616"/>
<rect x="2098.5" y="356.5" width="12.0" height="744.0" fill="#161616"/>
<rect x="2122.5" y="356.5" width="14.0" height="744.0" fill="#161616"/>
<path d="M636.5,338V1119.8 M650.5,338V1119.8 M662.5,338V1119.8 M674.5,338V1119.8 M688.5,338V1119.8 M700.5,338V1119.8 M712.5,338V1119.8 M726.5,338V1119.8 M738.5,338V1119.8 M752.5,338V1119.8 M764.5,338V1119.8 M790.5,338V1119.8 M802.5,338V1119.8 M814.5,338V1119.8 M828.5,338V1119.8 M840.5,338V1119.8 M852.5,338V1119.8 M866.5,338V1119.8 M878.5,338V1119.8 M890.5,338V1119.8 M904.5,338V1119.8 M916.5,338V1119.8 M942.5,338V1119.8 M954.5,338V1119.8 M966.5,338V1119.8 M980.5,338V1119.8 M992.5,338V1119.8 M1006.5,338V1119.8 M1018.5,338V1119.8 M1030.5,338V1119.8 M1044.5,338V1119.8 M1056.5,338V1119.8 M1068.5,338V1119.8 M1094.5,338V1119.8 M1106.5,338V1119.8 M1120.5,338V1119.8 M1132.5,338V1119.8 M1144.5,338V1119.8 M1158.5,338V1119.8 M1170.5,338V1119.8 M1182.5,338V1119.8 M1196.5,338V1119.8 M1208.5,338V1119.8 M1220.5,338V1119.8 M1246.5,338V1119.8 M1260.5,338V1119.8 M1272.5,338V1119.8 M1284.5,338V1119.8 M1298.5,338V1119.8 M1310.5,338V1119.8 M1322.5,338V1119.8 M1336.5,338V1119.8 M1348.5,338V1119.8 M1360.5,338V1119.8 M1374.5,338V1119.8 M1398.5,338V1119.8 M1412.5,338V1119.8 M1424.5,338V1119.8 M1436.5,338V1119.8 M1450.5,338V1119.8 M1462.5,338V1119.8 M1474.5,338V1119.8 M1488.5,338V1119.8 M1500.5,338V1119.8 M1514.5,338V1119.8 M1526.5,338V1119.8 M1552.5,338V1119.8 M1564.5,338V1119.8 M1576.5,338V1119.8 M1590.5,338V1119.8 M1602.5,338V1119.8 M1614.5,338V1119.8 M1628.5,338V1119.8 M1640.5,338V1119.8 M1652.5,338V1119.8 M1666.5,338V1119.8 M1678.5,338V1119.8 M1704.5,338V1119.8 M1716.5,338V1119.8 M1728.5,338V1119.8 M1742.5,338V1119.8 M1754.5,338V1119.8 M1768.5,338V1119.8 M1780.5,338V1119.8 M1792.5,338V1119.8 M1806.5,338V1119.8 M1818.5,338V1119.8 M1830.5,338V1119.8 M1856.5,338V1119.8 M1868.5,338V1119.8 M1882.5,338V1119.8 M1894.5,338V1119.8 M1906.5,338V1119.8 M1920.5,338V1119.8 M1932.5,338V1119.8 M1944.5,338V1119.8 M1958.5,338V1119.8 M1970.5,338V1119.8 M1982.5,338V1119.8 M2008.5,338V1119.8 M2022.5,338V1119.8 M2034.5,338V1119.8 M2046.5,338V1119.8 M2060.5,338V1119.8 M2072.5,338V1119.8 M2084.5,338V1119.8 M2098.5,338V1119.8 M2110.5,338V1119.8 M2122.5,338V1119.8 M2136.5,338V1119.8 M2146.5,356.5V1100.5" stroke="#383838" stroke-width="1.2" fill="none"/>
<path d="M624.5,320V1137.5 M776.5,320V1137.5 M928.5,320V1137.5 M1082.5,320V1137.5 M1234.5,320V1137.5 M1386.5,320V1137.5 M1538.5,320V1137.5 M1690.5,320V1137.5 M1844.5,320V1137.5 M1996.5,320V1137.5" stroke="#464646" stroke-width="1.2" fill="none"/>
<path d="M600,368.5H2172 M600,380.5H2172 M600,390.5H2172 M600,402.5H2172 M600,414.5H2172 M600,426.5H2172 M600,438.5H2172 M600,460.5H2172 M600,472.5H2172 M600,484.5H2172 M600,496.5H2172 M600,508.5H2172 M600,520.5H2172 M600,530.5H2172 M600,554.5H2172 M600,566.5H2172 M600,578.5H2172 M600,590.5H2172 M600,600.5H2172 M600,612.5H2172 M600,624.5H2172 M600,648.5H2172 M600,660.5H2172 M600,670.5H2172 M600,682.5H2172 M600,694.5H2172 M600,706.5H2172 M600,718.5H2172 M600,740.5H2172 M600,752.5H2172 M600,764.5H2172 M600,776.5H2172 M600,788.5H2172 M600,798.5H2172 M600,810.5H2172 M600,834.5H2172 M600,846.5H2172 M600,858.5H2172 M600,868.5H2172 M600,880.5H2172 M600,892.5H2172 M600,904.5H2172 M600,928.5H2172 M600,938.5H2172 M600,950.5H2172 M600,962.5H2172 M600,974.5H2172 M600,986.5H2172 M600,998.5H2172 M600,1020.5H2172 M600,1032.5H2172 M600,1044.5H2172 M600,1056.5H2172 M600,1068.5H2172 M600,1078.5H2172 M600,1090.5H2172 M624.5,1100.5H2146.5" stroke="#363636" stroke-width="1.2" fill="none"/>
<path d="M578,356.5H2194 M576,450.5H2196 M576,542.5H2196 M576,636.5H2196 M576,730.5H2196 M576,822.5H2196 M576,916.5H2196 M576,1008.5H2196" stroke="#404040" stroke-width="1.2" fill="none"/>
<text x="631.9" y="337.6" fill="#787878" font-size="20">C-0</text>
<text x="631.9" y="1131.6" fill="#787878" font-size="20">C-0</text>
<text x="783.9" y="337.6" fill="#787878" font-size="20">C-1</text>
<text x="783.9" y="1131.6" fill="#787878" font-size="20">C-1</text>
<text x="935.9" y="337.6" fill="#787878" font-size="20">C-2</text>
<text x="935.9" y="1131.6" fill="#787878" font-size="20">C-2</text>
<text x="1089.9" y="337.6" fill="#787878" font-size="20">C-3</text>
<text x="1089.9" y="1131.6" fill="#787878" font-size="20">C-3</text>
<text x="1241.9" y="337.6" fill="#787878" font-size="20">C-4</text>
<text x="1241.9" y="1131.6" fill="#787878" font-size="20">C-4</text>
<text x="1393.9" y="337.6" fill="#787878" font-size="20">C-5</text>
<text x="1393.9" y="1131.6" fill="#787878" font-size="20">C-5</text>
<text x="1545.9" y="337.6" fill="#787878" font-size="20">C-6</text>
<text x="1545.9" y="1131.6" fill="#787878" font-size="20">C-6</text>
<text x="1697.9" y="337.6" fill="#787878" font-size="20">C-7</text>
<text x="1697.9" y="1131.6" fill="#787878" font-size="20">C-7</text>
<text x="1851.9" y="337.6" fill="#787878" font-size="20">C-8</text>
<text x="1851.9" y="1131.6" fill="#787878" font-size="20">C-8</text>
<text x="2003.9" y="337.6" fill="#787878" font-size="20">C-9</text>
<text x="2003.9" y="1131.6" fill="#787878" font-size="20">C-9</text>
<text transform="translate(598.2,361.9) rotate(-90)" text-anchor="end" fill="#787878" font-size="20">80</text>
<text transform="translate(2194.2,361.9) rotate(-90)" text-anchor="end" fill="#787878" font-size="20">80</text>
<text transform="translate(598.2,455.9) rotate(-90)" text-anchor="end" fill="#787878" font-size="20">70</text>
<text transform="translate(2194.2,455.9) rotate(-90)" text-anchor="end" fill="#787878" font-size="20">70</text>
<text transform="translate(598.2,547.9) rotate(-90)" text-anchor="end" fill="#787878" font-size="20">60</text>
<text transform="translate(2194.2,547.9) rotate(-90)" text-anchor="end" fill="#787878" font-size="20">60</text>
<text transform="translate(598.2,641.9) rotate(-90)" text-anchor="end" fill="#787878" font-size="20">50</text>
<text transform="translate(2194.2,641.9) rotate(-90)" text-anchor="end" fill="#787878" font-size="20">50</text>
<text transform="translate(598.2,735.9) rotate(-90)" text-anchor="end" fill="#787878" font-size="20">40</text>
<text transform="translate(2194.2,735.9) rotate(-90)" text-anchor="end" fill="#787878" font-size="20">40</text>
<text transform="translate(598.2,827.9) rotate(-90)" text-anchor="end" fill="#787878" font-size="20">30</text>
<text transform="translate(2194.2,827.9) rotate(-90)" text-anchor="end" fill="#787878" font-size="20">30</text>
<text transform="translate(598.2,921.9) rotate(-90)" text-anchor="end" fill="#787878" font-size="20">20</text>
<text transform="translate(2194.2,921.9) rotate(-90)" text-anchor="end" fill="#787878" font-size="20">20</text>
<text transform="translate(598.2,1013.9) rotate(-90)" text-anchor="end" fill="#787878" font-size="20">10</text>
<text transform="translate(2194.2,1013.9) rotate(-90)" text-anchor="end" fill="#787878" font-size="20">10</text>
<defs>
<clipPath id="zc12"><rect x="777.3" y="357" width="12.8" height="743.5"/></clipPath>
<clipPath id="zc14"><rect x="803.3" y="357" width="10.8" height="743.5"/></clipPath>
<clipPath id="zc15"><rect x="815.3" y="357" width="12.8" height="743.5"/></clipPath>
<clipPath id="zc17"><rect x="841.3" y="357" width="10.8" height="743.5"/></clipPath>
<clipPath id="zc19"><rect x="867.3" y="357" width="10.8" height="743.5"/></clipPath>
<clipPath id="zc24"><rect x="929.3" y="357" width="12.8" height="743.5"/></clipPath>
<clipPath id="zc26"><rect x="955.3" y="357" width="10.8" height="743.5"/></clipPath>
<clipPath id="zc28"><rect x="981.3" y="357" width="10.8" height="743.5"/></clipPath>
</defs>
<rect x="778.0" y="358" width="10.0" height="741.5" fill="#37a0b6" fill-opacity="0.15" stroke="#37a0b6" stroke-opacity="0.22" stroke-width="1"/>
<g clip-path="url(#zc12)"><text transform="translate(795.4,358) rotate(-90)" text-anchor="end" fill="#3aa9c3" font-size="20">D#4_Op3_Rate_3_127_Op3_Noise_0_Op4_Level_0_Op5_Level_0_Op5_Rate_2_63_Op6_Coarse_63_Op6_Noise_0</text></g>
<rect x="804.0" y="358" width="8.0" height="741.5" fill="#37a0b6" fill-opacity="0.15" stroke="#37a0b6" stroke-opacity="0.22" stroke-width="1"/>
<g clip-path="url(#zc14)"><text transform="translate(821.4,358) rotate(-90)" text-anchor="end" fill="#3aa9c3" font-size="20">tt03-lo</text></g>
<rect x="816.0" y="358" width="10.0" height="741.5" fill="#37a0b6" fill-opacity="0.15" stroke="#37a0b6" stroke-opacity="0.22" stroke-width="1"/>
<g clip-path="url(#zc15)"><text transform="translate(833.4,358) rotate(-90)" text-anchor="end" fill="#3aa9c3" font-size="20">Claps_StayOnBeat.com (51)</text></g>
<rect x="841.9" y="357.6" width="9.6" height="742.4" fill="#215767"/>
<rect x="842.8" y="358.4" width="7.8" height="741" fill="none" stroke="#3aa9c3" stroke-width="1.7" stroke-dasharray="1.8 1.8"/>
<rect x="842.1" y="342" width="9.8" height="14" fill="#525252"/>
<rect x="842.1" y="1102" width="9.8" height="14" fill="#525252"/>
<rect x="844.1" y="355.6" width="5.4" height="3.4" fill="#3aa9c3"/>
<rect x="844.1" y="1098.4" width="5.4" height="3.4" fill="#3aa9c3"/>
<g clip-path="url(#zc17)"><text transform="translate(859.4,358) rotate(-90)" text-anchor="end" fill="#3aa9c3" font-size="20">A3_Op3_Rate_3_0_Op3_Noise_0_Op4_Level_127_Op5_Level_63_Op5_Rate_2_0_Op6_Coarse_63_Op6_Noise_63</text></g>
<rect x="868.0" y="358" width="8.0" height="741.5" fill="#37a0b6" fill-opacity="0.15" stroke="#37a0b6" stroke-opacity="0.22" stroke-width="1"/>
<g clip-path="url(#zc19)"><text transform="translate(885.4,358) rotate(-90)" text-anchor="end" fill="#3aa9c3" font-size="20">20091026103606_g#37f0000</text></g>
<rect x="930.0" y="358" width="10.0" height="741.5" fill="#37a0b6" fill-opacity="0.15" stroke="#37a0b6" stroke-opacity="0.22" stroke-width="1"/>
<g clip-path="url(#zc24)"><text transform="translate(947.4,358) rotate(-90)" text-anchor="end" fill="#3aa9c3" font-size="20">finger_cymbal_ding1_k_2_03</text></g>
<rect x="956.0" y="358" width="8.0" height="741.5" fill="#37a0b6" fill-opacity="0.15" stroke="#37a0b6" stroke-opacity="0.22" stroke-width="1"/>
<g clip-path="url(#zc26)"><text transform="translate(973.4,358) rotate(-90)" text-anchor="end" fill="#3aa9c3" font-size="20">B4_Op3_Rate_3_127_Op3_Noise_127_Op4_Level_127_Op5_Level_127_Op5_Rate_2_127_Op6_Coarse_127_Op6_Noise_127</text></g>
<rect x="982.0" y="358" width="8.0" height="741.5" fill="#37a0b6" fill-opacity="0.15" stroke="#37a0b6" stroke-opacity="0.22" stroke-width="1"/>
<g clip-path="url(#zc28)"><text transform="translate(999.4,358) rotate(-90)" text-anchor="end" fill="#3aa9c3" font-size="20">Asymmetrical 073</text></g>
<path d="M572,316h48v6h-42v42h-6z M2200,316h-48v6h42v42h6z M572,1174h48v-6h-42v-42h-6z M2200,1174h-48v-6h42v-42h6z" fill="#37a0b6"/>
<rect x="624.5" y="1140.5" width="1523" height="26.5" rx="3" fill="#606060"/>
<rect x="624.5" y="1140.5" width="126.5" height="26.5" rx="3" fill="#4b4b4b"/>
<rect x="2020.5" y="1140.5" width="127" height="26.5" rx="3" fill="#4b4b4b"/>
</svg>
<div class="t " style="left:575.6px;top:1185.08px;font-size:20px;line-height:24.0px;letter-spacing:-0.156px;color:#8c8c8c">Base Note</div>
<div class="vb" style="left:684px;top:1180px;width:104px;height:32px"></div>
<svg class="a" style="left:0;top:0" width="1" height="1"><path d="M695.4,1195 L704.3,1188.8 L704.3,1201.2Z M724.6999999999999,1195 L715.8,1188.8 L715.8,1201.2Z" fill="#b2b2b2"/></svg>
<div class="t teal" style="left:740.6px;top:1184.98px;font-size:20px;line-height:24.0px;letter-spacing:0.000px;"><span style="display:inline-block;width:12.7px;text-align:center">F</span><span style="display:inline-block;width:12.7px;text-align:center">-</span><span style="display:inline-block;width:12.7px;text-align:center">1</span></div>
<div class="t " style="left:802.4px;top:1185.08px;font-size:20px;line-height:24.0px;letter-spacing:-0.086px;color:#8c8c8c">Note</div>
<div class="vb" style="left:856px;top:1180px;width:104px;height:32px"></div>
<svg class="a" style="left:0;top:0" width="1" height="1"><path d="M867.4,1195 L876.3,1188.8 L876.3,1201.2Z M896.6999999999999,1195 L887.8,1188.8 L887.8,1201.2Z" fill="#b2b2b2"/></svg>
<div class="t teal" style="left:912.6px;top:1184.98px;font-size:20px;line-height:24.0px;letter-spacing:0.000px;"><span style="display:inline-block;width:12.7px;text-align:center">F</span><span style="display:inline-block;width:12.7px;text-align:center">-</span><span style="display:inline-block;width:12.7px;text-align:center">1</span></div>
<div class="vb" style="left:964px;top:1180px;width:104px;height:32px"></div>
<svg class="a" style="left:0;top:0" width="1" height="1"><path d="M975.4,1195 L984.3,1188.8 L984.3,1201.2Z M1004.6999999999999,1195 L995.8,1188.8 L995.8,1201.2Z" fill="#b2b2b2"/></svg>
<div class="t teal" style="left:1020.6px;top:1184.98px;font-size:20px;line-height:24.0px;letter-spacing:0.000px;"><span style="display:inline-block;width:12.7px;text-align:center">F</span><span style="display:inline-block;width:12.7px;text-align:center">-</span><span style="display:inline-block;width:12.7px;text-align:center">1</span></div>
<div class="a" style="left:1073px;top:1180.5px;width:98px;height:30.5px;background:linear-gradient(#389fb4,#3499ad);border-radius:5px;border:1px solid #2d8699"></div>
<div class="a" style="left:1481px;top:1180.5px;width:90.5px;height:30.5px;background:linear-gradient(#389fb4,#3499ad);border-radius:5px;border:1px solid #2d8699"></div>
<div class="t" style="left:1080.6px;top:1187.60px;font-family:'DejaVu Sans Condensed','DejaVu Sans',sans-serif;font-size:18.6px;line-height:22.32px;color:#000;-webkit-text-stroke:0.45px #000;transform-origin:0 0;transform:scaleX(0.9)">KEY</div>
<div class="t" style="left:1127.2px;top:1187.60px;font-family:'DejaVu Sans Condensed','DejaVu Sans',sans-serif;font-size:18.6px;line-height:22.32px;color:#000;-webkit-text-stroke:0.45px #000;transform-origin:0 0;transform:scaleX(0.87)">Pitch</div>
<div class="t" style="left:1490.6px;top:1187.60px;font-family:'DejaVu Sans Condensed','DejaVu Sans',sans-serif;font-size:18.6px;line-height:22.32px;color:#000;-webkit-text-stroke:0.45px #000;transform-origin:0 0;transform:scaleX(0.95)">VEL</div>
<div class="t" style="left:1533.2px;top:1187.60px;font-family:'DejaVu Sans Condensed','DejaVu Sans',sans-serif;font-size:18.6px;line-height:22.32px;color:#000;-webkit-text-stroke:0.45px #000;transform-origin:0 0;transform:scaleX(0.9)">VOL</div>
<svg class="a" style="left:0;top:0" width="1" height="1"><path d="M1112.2,1196.8H1118" stroke="#000" stroke-width="1.9"/><path d="M1117.6,1191.8L1123.2,1196.8L1117.6,1201.8Z" fill="#000"/><path d="M1520,1196.8H1526" stroke="#000" stroke-width="1.9"/><path d="M1525.6,1191.8L1531.2,1196.8L1525.6,1201.8Z" fill="#000"/></svg>
<div class="t " style="left:1193.4px;top:1185.08px;font-size:20px;line-height:24.0px;letter-spacing:0.124px;color:#8c8c8c">Velocity</div>
<div class="vb" style="left:1280px;top:1180px;width:96px;height:32px;">
</div>
<svg class="a" style="left:0;top:0" width="1" height="1"><path d="M1291.4,1195.0 L1300.3000000000002,1188.8 L1300.3000000000002,1201.2Z M1320.7000000000003,1195.0 L1311.8000000000002,1188.8 L1311.8000000000002,1201.2Z" fill="#b2b2b2"/></svg>
<div class="t teal mono" style="left:1338px;top:1184.98px;font-size:20px;line-height:24.0px;letter-spacing:0.000px;">00</div>
<div class="vb" style="left:1380px;top:1180px;width:96px;height:32px;">
</div>
<svg class="a" style="left:0;top:0" width="1" height="1"><path d="M1391.4,1195.0 L1400.3000000000002,1188.8 L1400.3000000000002,1201.2Z M1420.7000000000003,1195.0 L1411.8000000000002,1188.8 L1411.8000000000002,1201.2Z" fill="#b2b2b2"/></svg>
<div class="t teal mono" style="left:1438px;top:1184.98px;font-size:20px;line-height:24.0px;letter-spacing:0.000px;">7F</div>
<div class="t " style="left:1978.4px;top:1185.08px;font-size:20px;line-height:24.0px;letter-spacing:0.055px;color:#8c8c8c">Overlap</div>
<div class="vb" style="left:2062px;top:1180px;width:136px;height:32px;border-radius:5px 2px 2px 5px;">
<div class="dd" style="width:31px"></div>
</div>
<svg class="a" style="left:0;top:0" width="1" height="1"><path d="M2174.9,1192.05 L2187.2999999999997,1192.05 L2181.1,1200.3500000000001Z" fill="#cfcfcf"/></svg>
<div class="t teal" style="left:2068.2px;top:1184.98px;font-size:20px;line-height:24.0px;letter-spacing:0.142px;">Play All</div>
</div></body></html>
